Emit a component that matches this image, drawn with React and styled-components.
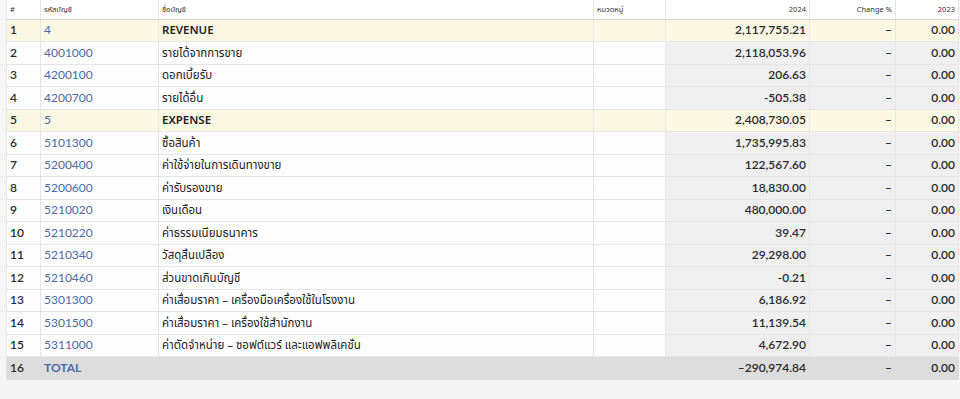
import React from 'react'
import styled, { createGlobalStyle } from 'styled-components';

const GlobalStyle = createGlobalStyle`
body{
    margin:0;
    background:#f5f5f5;
    font-family:"Noto Sans","Noto Sans Thai",sans-serif;
    color:#222;
}
`;

const rows = [
    {no:1, code:'4', name:'REVENUE', y24:'2,117,755.21', group:true},
    {no:2, code:'4001000', name:'รายได้จากการขาย', y24:'2,118,053.96'},
    {no:3, code:'4200100', name:'ดอกเบี้ยรับ', y24:'206.63'},
    {no:4, code:'4200700', name:'รายได้อื่น', y24:'-505.38'},
    {no:5, code:'5', name:'EXPENSE', y24:'2,408,730.05', group:true},
    {no:6, code:'5101300', name:'ซื้อสินค้า', y24:'1,735,995.83'},
    {no:7, code:'5200400', name:'ค่าใช้จ่ายในการเดินทางขาย', y24:'122,567.60'},
    {no:8, code:'5200600', name:'ค่ารับรองขาย', y24:'18,830.00'},
    {no:9, code:'5210020', name:'เงินเดือน', y24:'480,000.00'},
    {no:10, code:'5210220', name:'ค่าธรรมเนียมธนาคาร', y24:'39.47'},
    {no:11, code:'5210340', name:'วัสดุสิ้นเปลือง', y24:'29,298.00'},
    {no:12, code:'5210460', name:'ส่วนขาดเกินบัญชี', y24:'-0.21'},
    {no:13, code:'5301300', name:'ค่าเสื่อมราคา – เครื่องมือเครื่องใช้ในโรงงาน', y24:'6,186.92'},
    {no:14, code:'5301500', name:'ค่าเสื่อมราคา – เครื่องใช้สำนักงาน', y24:'11,139.54'},
    {no:15, code:'5311000', name:'ค่าตัดจำหน่าย – ซอฟต์แวร์ และแอฟพลิเคชั่น', y24:'4,672.90'},
];

function App() {
    return (
        <>
        <GlobalStyle/>
        <Wrapper>
            <Table>
                <colgroup>
                    <col style={{width:34}}/>
                    <col style={{width:118}}/>
                    <col style={{width:435}}/>
                    <col style={{width:72}}/>
                    <col style={{width:144}}/>
                    <col style={{width:86}}/>
                    <col style={{width:63}}/>
                </colgroup>
                <thead>
                    <tr>
                        <Th>#</Th>
                        <Th>รหัสบัญชี</Th>
                        <Th>ชื่อบัญชี</Th>
                        <Th>หมวดหมู่</Th>
                        <Th $right>2024</Th>
                        <Th $right>Change %</Th>
                        <Th $right>2023</Th>
                    </tr>
                </thead>
                <tbody>
                    {rows.map(r => (
                        <Row key={r.no} $group={r.group}>
                            <NoCell>{r.no}</NoCell>
                            <CodeCell>{r.code}</CodeCell>
                            <NameCell $group={r.group}>{r.name}</NameCell>
                            <Td></Td>
                            <NumCell>{r.y24}</NumCell>
                            <NumCell>–</NumCell>
                            <NumCell>0.00</NumCell>
                        </Row>
                    ))}
                    <TotalRow>
                        <NoCell>16</NoCell>
                        <CodeCell $bold>TOTAL</CodeCell>
                        <Td></Td>
                        <Td></Td>
                        <NumCell>–290,974.84</NumCell>
                        <NumCell>–</NumCell>
                        <NumCell>0.00</NumCell>
                    </TotalRow>
                </tbody>
            </Table>
        </Wrapper>
        </>
    )
}

export default App

const Wrapper = styled.div`
padding-left:6px;
padding-right:2px;
height:399px;
overflow:hidden;
`;

const Table = styled.table`
width:952px;
table-layout:fixed;
border-collapse:collapse;
background:#fff;
font-size:11.5px;
line-height:14px;
`;

const Th = styled.th`
height:18.5px;
padding:0 3px;
font-size:7.5px;
line-height:10px;
font-weight:400;
color:#333;
text-align:${p => p.$right ? 'right' : 'left'};
border:1px solid #e4e4e4;
border-top:none;
border-bottom:1px solid #d8d8d8;
background:#fff;
white-space:nowrap;
`;

const Td = styled.td`
height:21.5px;
padding:0 3px;
border:1px solid #e6e6e6;
white-space:nowrap;
overflow:hidden;
`;

const NoCell = styled(Td)`
font-family:Lato,"Noto Sans",sans-serif;
font-size:12px;
font-weight:600;
color:#2a2a2a;
`;

const CodeCell = styled(Td)`
font-family:Lato,"Noto Sans",sans-serif;
font-size:12px;
color:#4a6ba5;
font-weight:${p => p.$bold ? 700 : 400};
`;

const NameCell = styled(Td)`
font-weight:${p => p.$group ? 600 : 400};
`;

const NumCell = styled(Td)`
font-family:Lato,"Noto Sans",sans-serif;
font-size:12px;
text-align:right;
font-weight:600;
color:#2a2a2a;
background:#efefef;
`;

const Row = styled.tr`
background:${p => p.$group ? '#faf7e3' : '#fdfdfd'};
${NumCell}{
    background:${p => p.$group ? '#faf7e3' : '#efefef'};
}
`;

const TotalRow = styled.tr`
background:#dcdcdc;
${Td}{
    border-color:#dcdcdc;
}
${NumCell}{
    background:#dcdcdc;
}
`;
